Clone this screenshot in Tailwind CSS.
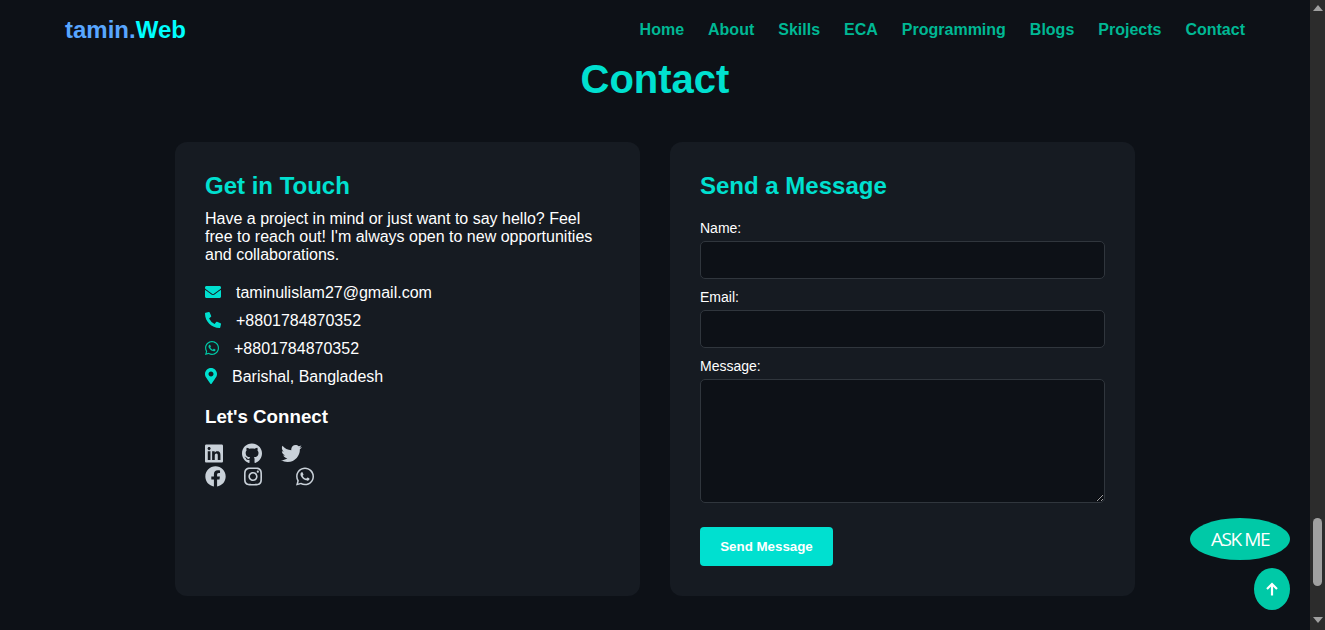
<!doctype html>
<html>
<head>
    <meta charset="UTF-8" />
    <meta name="viewport" content="width=device-width, initial-scale=1.0" />
    <script src="https://cdn.jsdelivr.net/npm/@tailwindcss/browser@4"></script>
    <title>Contact</title>
</head>
<body class="bg-[#0d1117] font-['Liberation_Sans',Arial,sans-serif] text-white overflow-hidden">
    <div class="flex h-[630px] overflow-hidden">
        <div class="flex-1 min-w-0">
            <header class="h-[56px] pt-[4px] pl-[65px] pr-[65px] flex justify-between items-center">
                <a href="#" class="text-[24px] font-bold text-[#58a6ff]">tamin.<span class="text-[#00ffff]">Web</span></a>
                <nav class="flex gap-[24px] text-[16px] font-bold text-[#00b894]">
                    <a href="#">Home</a>
                    <a href="#">About</a>
                    <a href="#">Skills</a>
                    <a href="#">ECA</a>
                    <a href="#">Programming</a>
                    <a href="#">Blogs</a>
                    <a href="#">Projects</a>
                    <a href="#">Contact</a>
                </nav>
            </header>

            <h1 class="text-[40px] leading-[46px] font-bold text-center text-[#00e0d0] mb-[40px]">Contact</h1>

            <main class="w-[960px] mx-auto grid grid-cols-2 gap-[30px]">
                <section class="bg-[#161b22] rounded-[12px] p-[30px]">
                    <h2 class="text-[24px] leading-[28px] font-bold text-[#00e0d0]">Get in Touch</h2>
                    <p class="mt-[10px] mb-[20px] text-[16px] leading-[18px]">Have a project in mind or just want to say hello? Feel free to reach out! I'm always open to new opportunities and collaborations.</p>

                    <div class="flex items-center gap-[15px] h-[18px] mb-[10px]">
                        <svg class="h-[16px] w-[16px] -mt-[2px] text-[#00e0d0]" viewBox="0 0 512 512" fill="currentColor"><path d="M502.3 190.8c3.9-3.1 9.7-.2 9.7 4.7V400c0 26.5-21.5 48-48 48H48c-26.5 0-48-21.5-48-48V195.6c0-5 5.7-7.8 9.7-4.7 22.4 17.4 52.1 39.5 154.1 113.6 21.1 15.4 56.7 47.8 92.2 47.6 35.7.3 72-32.8 92.3-47.6 102-74.1 131.6-96.3 154-113.7zM256 320c23.2.4 56.6-29.2 73.4-41.4 132.7-96.3 142.8-104.7 173.4-128.7 5.8-4.5 9.2-11.5 9.2-18.9v-19c0-26.5-21.5-48-48-48H48C21.5 64 0 85.5 0 112v19c0 7.4 3.4 14.3 9.2 18.9 30.6 23.9 40.7 32.4 173.4 128.7 16.8 12.2 50.2 41.8 73.4 41.4z"/></svg>
                        <span>taminulislam27@gmail.com</span>
                    </div>
                    <div class="flex items-center gap-[15px] h-[18px] mb-[10px]">
                        <svg class="h-[16px] w-[16px] -mt-[2px] text-[#00e0d0]" viewBox="0 0 512 512" fill="currentColor"><path d="M497.39 361.8l-112-48a24 24 0 0 0-28 6.9l-49.6 60.6A370.66 370.66 0 0 1 130.6 204.11l60.6-49.6a23.94 23.94 0 0 0 6.9-28l-48-112A24.16 24.16 0 0 0 122.6.61l-104 24A24 24 0 0 0 0 48c0 256.5 207.9 464 464 464a24 24 0 0 0 23.4-18.6l24-104a24.29 24.29 0 0 0-14.01-27.6z"/></svg>
                        <span>+8801784870352</span>
                    </div>
                    <div class="flex items-center gap-[15px] h-[18px] mb-[10px]">
                        <svg class="h-[16px] w-[14px] -mt-[2px] text-[#00c9a7]" viewBox="0 0 448 512" fill="currentColor"><path d="M380.9 97.1C339 55.1 283.2 32 223.9 32c-122.4 0-222 99.6-222 222 0 39.1 10.2 77.3 29.6 111L0 480l117.7-30.9c32.4 17.7 68.9 27 106.1 27h.1c122.3 0 224.1-99.6 224.1-222 0-59.3-25.2-115-67.1-157zm-157 341.6c-33.2 0-65.7-8.9-94-25.7l-6.7-4-69.8 18.3L72 359.2l-4.4-7c-18.5-29.4-28.2-63.3-28.2-98.2 0-101.7 82.8-184.5 184.6-184.5 49.3 0 95.6 19.2 130.4 54.1 34.8 34.9 56.2 81.2 56.1 130.5 0 101.8-84.9 184.6-186.6 184.6zm101.2-138.2c-5.5-2.8-32.8-16.2-37.9-18-5.1-1.9-8.8-2.8-12.5 2.8-3.7 5.6-14.3 18-17.6 21.8-3.2 3.7-6.5 4.2-12 1.4-32.6-16.3-54-29.1-75.5-66-5.7-9.8 5.7-9.1 16.3-30.3 1.8-3.7.9-6.9-.5-9.7-1.4-2.8-12.5-30.1-17.1-41.2-4.5-10.8-9.1-9.3-12.5-9.5-3.2-.2-6.9-.2-10.6-.2-3.7 0-9.7 1.4-14.8 6.9-5.1 5.6-19.4 19-19.4 46.3 0 27.3 19.9 53.7 22.6 57.4 2.8 3.7 39.1 59.7 94.8 83.8 35.2 15.2 49 16.5 66.6 13.9 10.7-1.6 32.8-13.4 37.4-26.4 4.6-13 4.6-24.1 3.2-26.4-1.3-2.5-5-3.9-10.5-6.6z"/></svg>
                        <span>+8801784870352</span>
                    </div>
                    <div class="flex items-center gap-[15px] h-[18px] mb-[10px]">
                        <svg class="h-[16px] w-[12px] -mt-[2px] text-[#00e0d0]" viewBox="0 0 384 512" fill="currentColor"><path d="M172.268 501.67C26.97 291.031 0 269.413 0 192 0 85.961 85.961 0 192 0s192 85.961 192 192c0 77.413-26.97 99.031-172.268 309.67-9.535 13.774-29.93 13.773-39.464 0zM192 272c44.183 0 80-35.817 80-80s-35.817-80-80-80-80 35.817-80 80 35.817 80 80 80z"/></svg>
                        <span>Barishal, Bangladesh</span>
                    </div>

                    <h3 class="mt-[20px] text-[18.72px] leading-[22px] font-bold">Let's Connect</h3>

                    <div class="mt-[14px] flex items-center h-[23px] text-[#c9d1d9]">
                        <svg class="h-[21px] w-[18px] mr-[19px]" viewBox="0 0 448 512" fill="currentColor"><path d="M416 32H31.9C14.3 32 0 46.5 0 64.3v383.4C0 465.5 14.3 480 31.9 480H416c17.6 0 32-14.5 32-32.3V64.3c0-17.8-14.4-32.3-32-32.3zM135.4 416H69V202.2h66.5V416zm-33.2-243c-21.3 0-38.5-17.3-38.5-38.5S80.9 96 102.2 96c21.2 0 38.5 17.3 38.5 38.5 0 21.3-17.2 38.5-38.5 38.5zm282.1 243h-66.4V312c0-24.8-.5-56.7-34.5-56.7-34.6 0-39.9 27-39.9 54.9V416h-66.4V202.2h63.7v29.2h.9c8.9-16.8 30.6-34.5 62.9-34.5 67.2 0 79.7 44.3 79.7 101.9V416z"/></svg>
                        <svg class="h-[21px] w-[20px] mr-[19px]" viewBox="0 0 496 512" fill="currentColor"><path d="M165.9 397.4c0 2-2.3 3.6-5.2 3.6-3.3.3-5.6-1.3-5.6-3.6 0-2 2.3-3.6 5.2-3.6 3-.3 5.6 1.3 5.6 3.6zm-31.1-4.5c-.7 2 1.3 4.3 4.3 4.9 2.6 1 5.6 0 6.2-2s-1.3-4.3-4.3-5.2c-2.6-.7-5.5.3-6.2 2.3zm44.2-1.7c-2.9.7-4.9 2.6-4.6 4.9.3 2 2.9 3.3 5.9 2.6 2.9-.7 4.9-2.6 4.6-4.6-.3-1.9-3-3.2-5.9-2.9zM244.8 8C106.1 8 0 113.3 0 252c0 110.9 69.8 205.8 169.5 239.2 12.8 2.3 17.3-5.6 17.3-12.1 0-6.2-.3-40.4-.3-61.4 0 0-70 15-84.7-29.8 0 0-11.4-29.1-27.8-36.6 0 0-22.9-15.7 1.6-15.4 0 0 24.9 2 38.6 25.8 21.9 38.6 58.6 27.5 72.9 20.9 2.3-16 8.8-27.1 16-33.7-55.9-6.2-112.3-14.3-112.3-110.5 0-27.5 7.6-41.3 23.6-58.9-2.6-6.5-11.1-33.3 2.6-67.9 20.9-6.5 69 27 69 27 20-5.6 41.5-8.5 62.8-8.5s42.8 2.9 62.8 8.5c0 0 48.1-33.6 69-27 13.7 34.7 5.2 61.4 2.6 67.9 16 17.7 25.8 31.5 25.8 58.9 0 96.5-58.9 104.2-114.8 110.5 9.2 7.9 17 22.9 17 46.4 0 33.7-.3 75.4-.3 83.6 0 6.5 4.6 14.4 17.3 12.1C428.2 457.8 496 362.9 496 252 496 113.3 383.5 8 244.8 8z"/></svg>
                        <svg class="h-[21px] w-[21px]" viewBox="0 0 512 512" fill="currentColor"><path d="M459.37 151.716c.325 4.548.325 9.097.325 13.645 0 138.72-105.583 298.558-298.558 298.558-59.452 0-114.68-17.219-161.137-47.106 8.447.974 16.568 1.299 25.34 1.299 49.055 0 94.213-16.568 130.274-44.832-46.132-.975-84.792-31.188-98.112-72.772 6.498.974 12.995 1.624 19.818 1.624 9.421 0 18.843-1.3 27.614-3.573-48.081-9.747-84.143-51.98-84.143-102.985v-1.299c13.969 7.797 30.214 12.67 47.431 13.319-28.264-18.843-46.781-51.005-46.781-87.391 0-19.492 5.197-37.36 14.294-52.954 51.655 63.675 129.3 105.258 216.365 109.807-1.624-7.797-2.599-15.918-2.599-24.04 0-57.828 46.782-104.934 104.934-104.934 30.213 0 57.502 12.67 76.67 33.137 23.715-4.548 46.456-13.32 66.599-25.34-7.798 24.366-24.366 44.833-46.132 57.827 21.117-2.273 41.584-8.122 60.426-16.243-14.292 20.791-32.161 39.308-52.628 54.253z"/></svg>
                    </div>
                    <div class="flex items-center h-[23px] text-[#c9d1d9]">
                        <svg class="h-[21px] w-[21px] mr-[18px]" viewBox="0 0 512 512" fill="currentColor"><path d="M504 256C504 119 393 8 256 8S8 119 8 256c0 123.78 90.69 226.38 209.25 245V327.69h-63V256h63v-54.64c0-62.15 37-96.48 93.67-96.48 27.14 0 55.52 4.84 55.52 4.84v61h-31.28c-30.8 0-40.41 19.12-40.41 38.73V256h68.78l-11 71.69h-57.78V501C413.31 482.38 504 379.78 504 256z"/></svg>
                        <svg class="h-[21px] w-[18px] mr-[34px]" viewBox="0 0 448 512" fill="currentColor"><path d="M224.1 141c-63.6 0-114.9 51.3-114.9 114.9s51.3 114.9 114.9 114.9S339 319.5 339 255.9 287.7 141 224.1 141zm0 189.6c-41.1 0-74.7-33.5-74.7-74.7s33.5-74.7 74.7-74.7 74.7 33.5 74.7 74.7-33.6 74.7-74.7 74.7zm146.4-194.3c0 14.9-12 26.8-26.8 26.8-14.9 0-26.8-12-26.8-26.8s12-26.8 26.8-26.8 26.8 12 26.8 26.8zm76.1 27.2c-1.7-35.9-9.9-67.7-36.2-93.9-26.2-26.2-58-34.4-93.9-36.2-37-2.1-147.9-2.1-184.9 0-35.8 1.7-67.6 9.9-93.9 36.1s-34.4 58-36.2 93.9c-2.1 37-2.1 147.9 0 184.9 1.7 35.9 9.9 67.7 36.2 93.9s58 34.4 93.9 36.2c37 2.1 147.9 2.1 184.9 0 35.9-1.7 67.7-9.9 93.9-36.2 26.2-26.2 34.4-58 36.2-93.9 2.1-37 2.1-147.8 0-184.8zM398.8 388c-7.8 19.6-22.9 34.7-42.6 42.6-29.5 11.7-99.5 9-132.1 9s-102.7 2.6-132.1-9c-19.6-7.8-34.7-22.9-42.6-42.6-11.7-29.5-9-99.5-9-132.1s-2.6-102.7 9-132.1c7.8-19.6 22.9-34.7 42.6-42.6 29.5-11.7 99.5-9 132.1-9s102.7-2.6 132.1 9c19.6 7.8 34.7 22.9 42.6 42.6 11.7 29.5 9 99.5 9 132.1s2.7 102.7-9 132.1z"/></svg>
                        <svg class="h-[21px] w-[18px]" viewBox="0 0 448 512" fill="currentColor"><path d="M380.9 97.1C339 55.1 283.2 32 223.9 32c-122.4 0-222 99.6-222 222 0 39.1 10.2 77.3 29.6 111L0 480l117.7-30.9c32.4 17.7 68.9 27 106.1 27h.1c122.3 0 224.1-99.6 224.1-222 0-59.3-25.2-115-67.1-157zm-157 341.6c-33.2 0-65.7-8.9-94-25.7l-6.7-4-69.8 18.3L72 359.2l-4.4-7c-18.5-29.4-28.2-63.3-28.2-98.2 0-101.7 82.8-184.5 184.6-184.5 49.3 0 95.6 19.2 130.4 54.1 34.8 34.9 56.2 81.2 56.1 130.5 0 101.8-84.9 184.6-186.6 184.6zm101.2-138.2c-5.5-2.8-32.8-16.2-37.9-18-5.1-1.9-8.8-2.8-12.5 2.8-3.7 5.6-14.3 18-17.6 21.8-3.2 3.7-6.5 4.2-12 1.4-32.6-16.3-54-29.1-75.5-66-5.7-9.8 5.7-9.1 16.3-30.3 1.8-3.7.9-6.9-.5-9.7-1.4-2.8-12.5-30.1-17.1-41.2-4.5-10.8-9.1-9.3-12.5-9.5-3.2-.2-6.9-.2-10.6-.2-3.7 0-9.7 1.4-14.8 6.9-5.1 5.6-19.4 19-19.4 46.3 0 27.3 19.9 53.7 22.6 57.4 2.8 3.7 39.1 59.7 94.8 83.8 35.2 15.2 49 16.5 66.6 13.9 10.7-1.6 32.8-13.4 37.4-26.4 4.6-13 4.6-24.1 3.2-26.4-1.3-2.5-5-3.9-10.5-6.6z"/></svg>
                    </div>
                </section>

                <section class="bg-[#161b22] rounded-[12px] p-[30px]">
                    <h2 class="text-[24px] leading-[28px] font-bold text-[#00e0d0] mb-[20px]">Send a Message</h2>
                    <form>
                        <label class="block text-[14px] leading-[16px] mb-[5px]">Name:</label>
                        <input type="text" class="block w-full h-[38px] mb-[10px] bg-[#0d1117] border border-[#30363d] rounded-[5px]">
                        <label class="block text-[14px] leading-[16px] mb-[5px]">Email:</label>
                        <input type="email" class="block w-full h-[38px] mb-[10px] bg-[#0d1117] border border-[#30363d] rounded-[5px]">
                        <label class="block text-[14px] leading-[16px] mb-[5px]">Message:</label>
                        <textarea class="block w-full h-[124px] mb-[24px] bg-[#0d1117] border border-[#30363d] rounded-[5px]"></textarea>
                        <button type="button" class="block w-[133px] h-[39px] bg-[#00e0d0] rounded-[4px] text-[13.33px] font-bold">Send Message</button>
                    </form>
                </section>
            </main>
        </div>

        <aside class="w-[15px] shrink-0 bg-[#2c2c2c] flex flex-col items-center">
            <svg class="mt-[5px] w-[10px] h-[6px] text-[#a0a0a0]" viewBox="0 0 10 6" fill="currentColor"><path d="M5 0l5 6H0z"/></svg>
            <div class="mt-auto w-[9px] h-[68px] rounded-full bg-[#a0a0a0]"></div>
            <svg class="mt-[31px] mb-[7px] w-[10px] h-[6px] text-[#a0a0a0]" viewBox="0 0 10 6" fill="currentColor"><path d="M0 0h10L5 6z"/></svg>
        </aside>
    </div>

    <button class="fixed left-[1190px] top-[518px] w-[100px] h-[42px] rounded-[50%] bg-[#00c9a7] font-['Open_Sans',sans-serif] text-[19px] font-medium tracking-[-1.4px]">ASK ME</button>
    <button class="fixed left-[1254px] top-[568px] w-[36px] h-[42px] rounded-[50%] bg-[#00c9a7] flex items-center justify-center">
        <svg class="w-[14px] h-[14px]" viewBox="0 0 14 14" fill="none" stroke="currentColor" stroke-width="2.2"><path d="M7 13.5V2M2 7l5-5 5 5"/></svg>
    </button>
</body>
</html>
